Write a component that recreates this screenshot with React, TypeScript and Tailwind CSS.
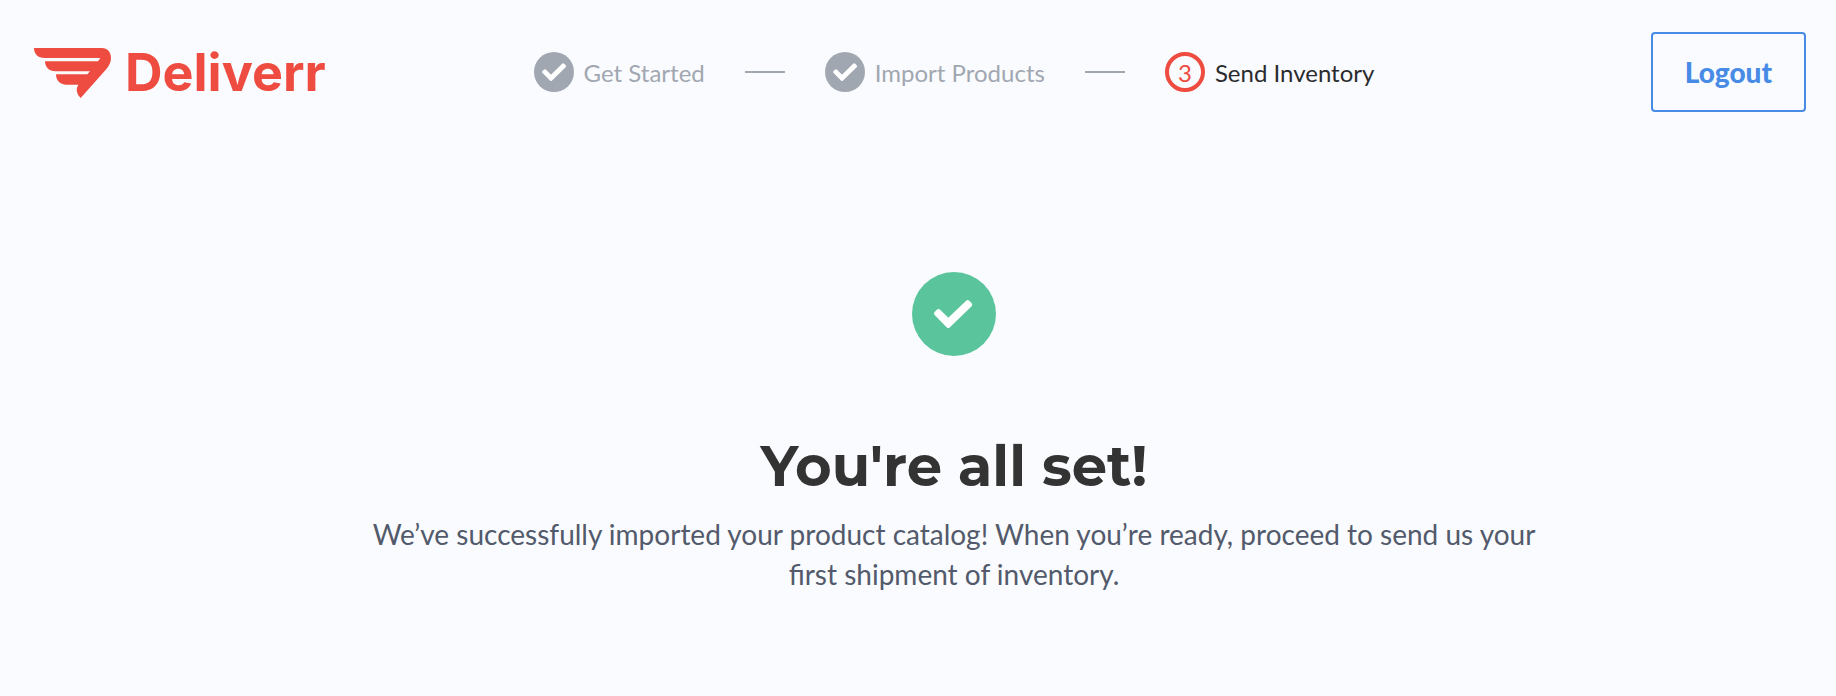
interface Step {
  label: string;
  done: boolean;
}

const steps: Step[] = [
  { label: 'Get Started', done: true },
  { label: 'Import Products', done: true },
  { label: 'Send Inventory', done: false },
];

function Logo() {
  return (
    <a href="#" className="flex items-center gap-3.5 pt-0.5 text-[#ee4c40]">
      <svg viewBox="0 0 231 150" className="h-[50px] w-[77px] shrink-0" fill="currentColor" aria-hidden="true">
        <path d="M0 0H203C222 0 231 14 231 30C231 42 226 52 218 62L140 150Q120 130 133 110H97C78 110 66 98 66 79H160L168 70H64C46 70 33 58 33 40H192L199 30H32C12 30 0 18 0 0Z" />
      </svg>
      <span className="font-['Inter',sans-serif] text-[52px] leading-[50px] font-bold">Deliverr</span>
    </a>
  );
}

function StepIcon({ step, index }: { step: Step; index: number }) {
  if (step.done) {
    return (
      <svg viewBox="0 0 40 40" className="size-10 shrink-0" aria-hidden="true">
        <circle cx="20" cy="20" r="20" fill="#a1a7b1" />
        <path
          d="M9.6 20L11 18.8L17 24.8L29.2 12.8L30.6 14.2L17 27.4Z"
          fill="white"
          stroke="white"
          strokeWidth="3"
          strokeLinejoin="round"
        />
      </svg>
    );
  }

  return (
    <span className="flex size-10 shrink-0 items-center justify-center rounded-full border-4 border-[#ee4c40] pt-0.5 text-2xl text-[#ee4c40]">
      {index + 1}
    </span>
  );
}

function Steps() {
  return (
    <ol className="flex items-center gap-10 pl-17">
      {steps.map((step, index) => (
        <li key={step.label} className="flex items-center gap-10">
          {index > 0 && <span className="h-0.5 w-10 bg-[#a1a7b1]" />}
          <span className="flex items-center gap-2.5">
            <StepIcon step={step} index={index} />
            <span className={`pt-0.5 text-2xl whitespace-nowrap ${step.done ? 'text-[#a1a7b1]' : 'text-[#2b2b2e]'}`}>
              {step.label}
            </span>
          </span>
        </li>
      ))}
    </ol>
  );
}

export default function App() {
  return (
    <div className="min-h-screen bg-[#fafbfe] font-['Lato',sans-serif]">
      <header className="grid grid-cols-[1fr_auto_1fr] items-center py-8 pr-[30px] pl-[34px]">
        <Logo />
        <Steps />
        <button
          type="button"
          className="justify-self-end rounded border-2 border-[#478be6] px-8 py-[22px] text-[28px] leading-8 font-black text-[#478be6]"
        >
          Logout
        </button>
      </header>

      <main className="flex flex-col items-center pt-32 pl-18 text-center">
        <svg viewBox="0 0 84 84" className="size-21" aria-hidden="true">
          <circle cx="42" cy="42" r="42" fill="#5ac59d" />
          <path
            d="M24 41.5L26.5 39L36.3 48.4L55.8 30L58.2 32.7L36.3 54Z"
            fill="white"
            stroke="white"
            strokeWidth="4"
            strokeLinejoin="round"
          />
        </svg>
        <h1 className="mt-19 font-['Montserrat',sans-serif] text-[56px] leading-[68px] font-bold text-[#333333]">
          You&apos;re all set!
        </h1>
        <p className="mt-3.5 max-w-[1200px] text-[28px] leading-10 text-[#525a6b]">
          We’ve successfully imported your product catalog! When you’re ready, proceed to send us your first shipment of
          inventory.
        </p>
      </main>
    </div>
  );
}
